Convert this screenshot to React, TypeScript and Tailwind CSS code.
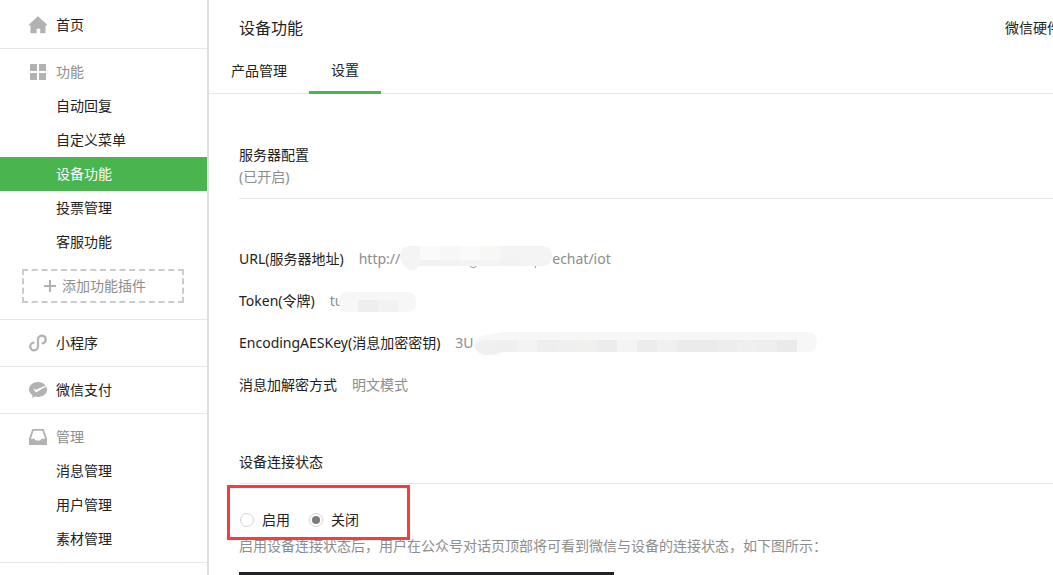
import type { ReactNode } from "react";

function HomeIcon() {
  return (
    <svg width="18" height="18" viewBox="0 0 18 18" fill="#b2b2b2" aria-hidden="true">
      <path d="M9 0.3 18 8.6v.9h-1.500v6.800a.9.9 0 0 1-.9.9H11.200v-4.400H7.600v4.400H2.400a.9.9 0 0 1-.9-.9V9.500H0v-.9z" />
    </svg>
  );
}

function GridIcon() {
  return (
    <svg width="18" height="18" viewBox="0 0 18 18" fill="#b2b2b2" aria-hidden="true">
      <path d="M1 1h7v7H1zM10 1h7v7h-7zM1 10h7v7H1zM10 10h7v7h-7z" />
    </svg>
  );
}

function MiniProgramIcon() {
  return (
    <svg width="18" height="18" viewBox="0 0 18 18" fill="none" stroke="#b2b2b2" strokeWidth="2.2" strokeLinecap="round" aria-hidden="true">
      <path d="M4.500 8.700A3.900 3.900 0 1 0 9 12.600V5.400A4 4 0 0 1 13 1.600a4 3.900 0 0 1 .6 7.700" />
    </svg>
  );
}

function PayIcon() {
  return (
    <svg width="18" height="18" viewBox="0 0 18 18" aria-hidden="true">
      <path fill="#b2b2b2" d="M9 1c5 0 9 3.300 9 7.500s-4 7.400-9 7.400c-1 0-2-.1-2.900-.4L3.100 17.100l.4-2.900C1.400 12.800 0 10.800 0 8.500 0 4.300 4 1 9 1z" />
      <path fill="#fff" d="M4.300 7.200 7 8.700 17 4.300 17.300 5.200 7.500 11.200Q6.500 11.600 6.100 10.800z" />
    </svg>
  );
}

function InboxIcon() {
  return (
    <svg width="18" height="18" viewBox="0 0 18 18" aria-hidden="true">
      <path fill="#b2b2b2" fillRule="evenodd" d="M3.300 1h11.400L18 10.500V17H0v-6.500zM4.600 2.700 1.900 10.700H5.500Q6 12.500 7.300 12.500H10.700Q12 12.500 12.500 10.700H16.100L13.400 2.700z" />
    </svg>
  );
}

function PlusIcon() {
  return (
    <svg width="12" height="12" viewBox="0 0 12 12" fill="#b2b2b2" aria-hidden="true">
      <path d="M5 0h2v5h5v2H7v5H5V7H0V5h5z" />
    </svg>
  );
}

function Heading({ icon, text, link }: { icon: ReactNode; text: string; link?: boolean }) {
  return (
    <div className="flex h-[34px] items-center gap-[9px] pl-[29px]">
      {icon}
      {link ? <a href="#">{text}</a> : <span className="text-[#8d8d8d]">{text}</span>}
    </div>
  );
}

function Items({ items, active }: { items: string[]; active?: string }) {
  return (
    <ul>
      {items.map((item) => (
        <li key={item}>
          <a
            href="#"
            className={
              item === active
                ? "block bg-[#4ab54f] pl-14 leading-[34px] text-white"
                : "block pl-14 leading-[34px]"
            }
          >
            {item}
          </a>
        </li>
      ))}
    </ul>
  );
}

function Sidebar() {
  return (
    <nav className="w-[209px] shrink-0 border-r-2 border-[#dfdfe0]">
      <div className="border-b border-[#e7e7eb] pt-2 pb-1.5">
        <Heading icon={<HomeIcon />} text="首页" link />
      </div>
      <div className="border-b border-[#e7e7eb] pt-1.5 pb-4">
        <Heading icon={<GridIcon />} text="功能" />
        <Items items={["自动回复", "自定义菜单", "设备功能", "投票管理", "客服功能"]} active="设备功能" />
        <button
          type="button"
          className="mt-2.5 ml-[22px] flex h-[34px] w-[162px] items-center gap-1.5 border-2 border-dashed border-[#cbcbcb] pl-5 text-[#8d8d8d]"
        >
          <PlusIcon />
          添加功能插件
        </button>
      </div>
      <div className="border-b border-[#e7e7eb] py-1.5">
        <Heading icon={<MiniProgramIcon />} text="小程序" link />
      </div>
      <div className="border-b border-[#e7e7eb] py-1.5">
        <Heading icon={<PayIcon />} text="微信支付" link />
      </div>
      <div className="border-b border-[#e7e7eb] py-1.5">
        <Heading icon={<InboxIcon />} text="管理" />
        <Items items={["消息管理", "用户管理", "素材管理"]} />
      </div>
    </nav>
  );
}

function Row({ label, children }: { label: string; children: ReactNode }) {
  return (
    <div className="flex gap-[15px] leading-[22px]">
      <dt>{label}</dt>
      <dd className="flex text-[#8d8d8d]">{children}</dd>
    </div>
  );
}

function UrlMask() {
  return (
    <svg width="152" height="22" viewBox="0 0 152 22" className="shrink-0 overflow-visible" aria-hidden="true">
      <path d="M70 18q4 4 7-1M135 20l1-3M148 16l2-5" stroke="#999" fill="none" />
      <path fill="#f4f4f4" d="M10-2H142q10 0 10 10t-10 10H18q-2 5-7 4t-7-5Q0 14 0 8 0-2 10-2z" />
      <path fill="#fafafa" d="M20-2h20V12H20zM60-2h20V12H60z" />
      <path fill="#f7f7f5" d="M40-2h20V12H40zM80-2h20V12H80z" />
      <path fill="#f2f2f2" d="M20 12h40v6H20zM100 12h20v6h-20z" />
    </svg>
  );
}

function TokenMask() {
  return (
    <svg width="77" height="22" viewBox="0 0 77 22" className="-ml-1 overflow-visible" aria-hidden="true">
      <path fill="#f7f7f7" d="M8 2h60q9 0 9 10t-9 10H10Q0 22 0 12 0 2 8 2z" />
      <path fill="#eeeeee" d="M19 10h20v12H19z" />
      <path fill="#f1f2f2" d="M39 10h20v12H39z" />
    </svg>
  );
}

const KEY_CELLS = ["#f1f1f1", "#efefef", "#f3f3f3", "#eeeeee", "#efefef", "#f0f0ee", "#ececec", "#f4f4f4", "#ececec", "#f0f0f0", "#ebebeb", "#ebebeb", "#ededed", "#efefef", "#eeeeee", "#eaeaea"];

function KeyMask() {
  return (
    <svg width="343" height="22" viewBox="0 0 343 22" className="overflow-visible" aria-hidden="true">
      <path fill="#f7f7f7" d="M0 13Q3 4 12 3L30 0H333q10 0 10 10t-10 10H30q-6 3-15 3Q2 23 0 13z" />
      <path fill="#f0f0f0" d="M0 13q4-5 14-5h14v12q-6 3-13 3Q2 23 0 13z" />
      {KEY_CELLS.slice(1).map((fill, i) => (
        <rect key={i} x={23 + i * 20} y="8" width="20" height="12" fill={fill} />
      ))}
    </svg>
  );
}

function Radio({ label, checked }: { label: string; checked?: boolean }) {
  return (
    <label className="flex items-center gap-2">
      <input
        type="radio"
        name="connection"
        defaultChecked={checked}
        className="size-3.5 appearance-none rounded-full border border-[#d3d3d3] bg-clip-content p-0.5 checked:bg-[#7b7b7b]"
      />
      {label}
    </label>
  );
}

export default function App() {
  return (
    <div className="flex h-screen overflow-hidden bg-white font-['Noto_Sans','Noto_Sans_CJK_SC',sans-serif] text-sm text-[#222]" lang="zh-CN">
      <Sidebar />
      <main className="min-w-[882px] flex-1">
        <header className="flex items-center justify-between px-[30px] pt-4">
          <h1 className="text-base leading-6">设备功能</h1>
          <a href="#">微信硬件</a>
        </header>
        <div className="mt-[9px] flex border-b border-[#e7e7eb]">
          <a href="#" className="px-[22px] leading-[44px]">产品管理</a>
          <a href="#" className="-mb-px border-b-3 border-[#4ab54f] px-[22px] leading-[42px]">设置</a>
        </div>
        <section className="pt-[50px] pl-[30px]">
          <div className="border-b border-[#e7e7eb] pb-2.5 leading-[22px]">
            <h2>服务器配置</h2>
            <p className="text-[#8d8d8d]">(已开启)</p>
          </div>
          <dl className="flex flex-col gap-5 pt-[49px]">
            <Row label="URL(服务器地址)">
              http://
              <UrlMask />
              echat/iot
            </Row>
            <Row label="Token(令牌)">
              tu
              <TokenMask />
            </Row>
            <Row label="EncodingAESKey(消息加密密钥)">
              3U
              <KeyMask />
            </Row>
            <Row label="消息加解密方式">明文模式</Row>
          </dl>
        </section>
        <section className="pt-[55px] pl-[30px]">
          <h2 className="border-b border-[#e7e7eb] pb-2.5 leading-[22px]">设备连接状态</h2>
          <div className="relative pt-[25px]">
            <div className="flex gap-[19px] pl-px leading-[22px]">
              <Radio label="启用" />
              <Radio label="关闭" checked />
            </div>
            <div className="pointer-events-none absolute top-px -left-3 h-[55px] w-[183px] border-3 border-[#fa3a3d]" />
            <p className="pt-1 leading-[22px] text-[#8d8d8d]">
              启用设备连接状态后，用户在公众号对话页顶部将可看到微信与设备的连接状态，如下图所示：
            </p>
          </div>
          <div className="mt-[15px] h-10 w-[375px] bg-[#222126]" />
        </section>
      </main>
    </div>
  );
}
